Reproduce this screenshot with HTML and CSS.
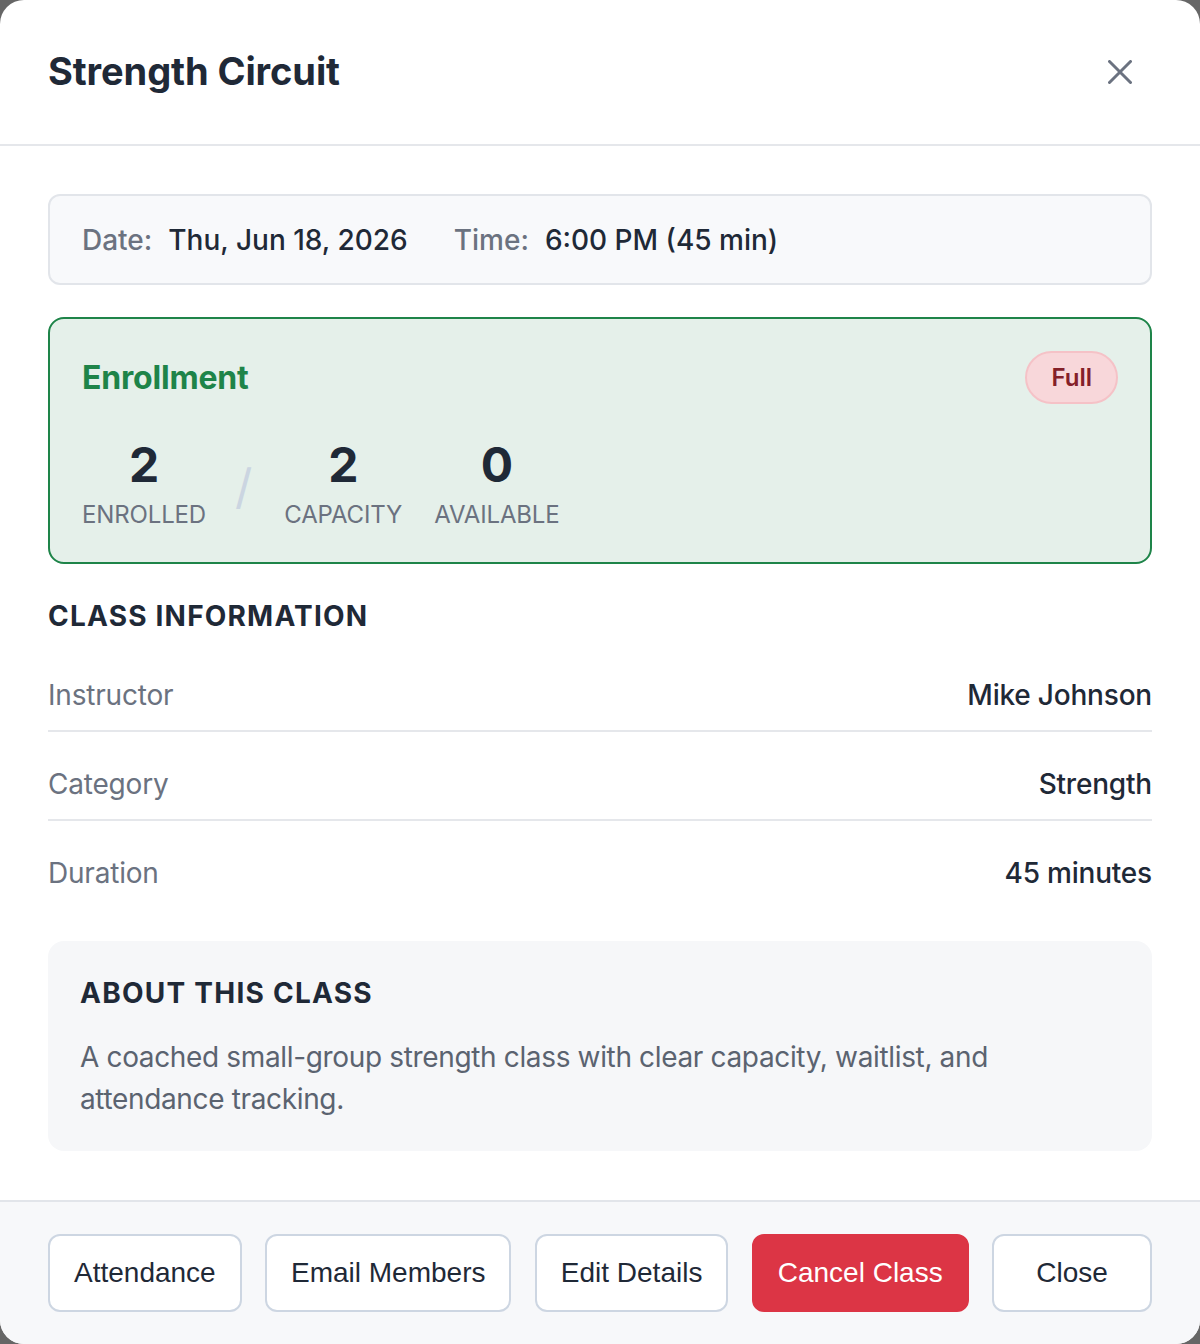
FILE: index.html
```html
<!DOCTYPE html>
<html lang="en">
<head>
<meta charset="utf-8">
<title>Strength Circuit</title>
<link rel="stylesheet" href="styles.css">
</head>
<body>
<div class="modal">
  <header class="modal-header">
    <h2 class="title">Strength Circuit</h2>
    <button class="close-x" aria-label="Close">
      <svg width="24" height="24" viewBox="0 0 24 24" fill="none" stroke="currentColor" stroke-width="3" stroke-linecap="round"><path d="M1.5 1.5L22.5 22.5M22.5 1.5L1.5 22.5"/></svg>
    </button>
  </header>
  <div class="modal-body">
    <div class="datetime">
      <div class="dt-group"><span class="dt-label">Date:</span><span class="dt-value">Thu, Jun 18, 2026</span></div>
      <div class="dt-group"><span class="dt-label">Time:</span><span class="dt-value">6:00 PM (45 min)</span></div>
    </div>

    <section class="enrollment">
      <div class="enr-head">
        <h3 class="enr-title">Enrollment</h3>
        <span class="badge">Full</span>
      </div>
      <div class="stats">
        <div class="stat"><div class="stat-num">2</div><div class="stat-label">Enrolled</div></div>
        <div class="stat-sep">/</div>
        <div class="stat"><div class="stat-num">2</div><div class="stat-label">Capacity</div></div>
        <div class="stat"><div class="stat-num">0</div><div class="stat-label">Available</div></div>
      </div>
    </section>

    <h4 class="section-title">Class Information</h4>
    <div class="info-list">
      <div class="info-row"><span class="info-label">Instructor</span><span class="info-value">Mike Johnson</span></div>
      <div class="info-row"><span class="info-label">Category</span><span class="info-value">Strength</span></div>
      <div class="info-row"><span class="info-label">Duration</span><span class="info-value">45 minutes</span></div>
    </div>

    <section class="about">
      <h4 class="about-title">About This Class</h4>
      <p class="about-text">A coached small-group strength class with clear capacity, waitlist, and attendance tracking.</p>
    </section>
  </div>
  <footer class="modal-footer">
    <button class="btn">Attendance</button>
    <button class="btn">Email Members</button>
    <button class="btn">Edit Details</button>
    <button class="btn btn-danger">Cancel Class</button>
    <button class="btn btn-close">Close</button>
  </footer>
</div>
</body>
</html>
```

FILE: styles.css
```css
* { box-sizing: border-box; }
html, body { margin: 0; padding: 0; }
body {
  background: #666666;
  font-family: Inter, "Noto Sans", sans-serif;
  color: #1f2937;
}
.modal {
  width: 1200px;
  height: 1344px;
  background: #ffffff;
  border-radius: 24px;
  overflow: hidden;
  display: flex;
  flex-direction: column;
}
.modal-header {
  display: flex;
  align-items: center;
  justify-content: space-between;
  padding: 48px 48px 49px 48px;
  border-bottom: 2px solid #e5e7eb;
}
.title {
  margin: 0;
  font-size: 38px;
  line-height: 47px;
  font-weight: 700;
  color: #1f2937;
  letter-spacing: -0.1px;
}
.close-x {
  border: 0;
  background: none;
  padding: 0;
  margin-right: 20px;
  width: 24px;
  height: 24px;
  color: #6b7280;
  display: flex;
}
.modal-body {
  flex: 1;
  padding: 48px 48px 0 48px;
}
.datetime {
  display: flex;
  gap: 46px;
  background: #f8f9fb;
  border: 2px solid #e2e5ea;
  border-radius: 12px;
  padding: 23px 32px 22px 32px;
  font-size: 28px;
  line-height: 42px;
  font-weight: 500;
}
.dt-group { display: flex; gap: 16px; }
.dt-label { color: #6b7280; }
.dt-value { color: #1f2937; }

.enrollment {
  margin-top: 32px;
  background: #e5f0ea;
  border: 2px solid #1e8449;
  border-radius: 16px;
  padding: 32px 32px 31px 32px;
}
.enr-head {
  display: flex;
  align-items: center;
  justify-content: space-between;
}
.enr-title {
  margin: 0;
  font-size: 32px;
  line-height: 40px;
  font-weight: 700;
  color: #1e8449;
  letter-spacing: -0.2px;
}
.badge {
  background: #f8d7da;
  border: 2px solid #f5c2c7;
  color: #842029;
  border-radius: 999px;
  padding: 8px 24px;
  font-size: 24px;
  line-height: 33px;
  font-weight: 600;
}
.stats {
  display: flex;
  align-items: center;
  gap: 32px;
  margin-top: 32px;
}
.stat {
  display: flex;
  flex-direction: column;
  align-items: center;
}
.stat-num {
  font-size: 48px;
  line-height: 58px;
  font-weight: 700;
  color: #1f2937;
}
.stat-label {
  margin-top: 5px;
  font-size: 24px;
  line-height: 32px;
  text-transform: uppercase;
  color: #6b7280;
  letter-spacing: -0.15px;
}
.stat-sep {
  font-size: 48px;
  line-height: 58px;
  color: #cbd5e1;
  font-weight: 400;
  margin-top: 6px;
  margin-left: -3px;
}

.section-title {
  margin: 31px 0 6px 0;
  font-size: 28px;
  line-height: 42px;
  font-weight: 700;
  text-transform: uppercase;
  letter-spacing: 1.2px;
  color: #1f2937;
}
.info-row {
  display: flex;
  justify-content: space-between;
  padding: 31px 0 14px 0;
  font-size: 28px;
  line-height: 42px;
  border-bottom: 2px solid #e5e7eb;
}
.info-row:last-child { border-bottom: 0; }
.info-label { color: #6b7280; letter-spacing: -0.2px; }
.info-value { color: #1f2937; font-weight: 500; letter-spacing: -0.2px; }

.about {
  margin-top: 33px;
  background: #f6f7f9;
  border-radius: 16px;
  padding: 31px 32px;
}
.about-title {
  margin: 0 0 22px 0;
  font-size: 28px;
  line-height: 42px;
  font-weight: 700;
  text-transform: uppercase;
  letter-spacing: 1.25px;
  color: #1f2937;
}
.about-text {
  margin: 0;
  font-size: 28px;
  line-height: 42px;
  color: #5b6370;
  letter-spacing: -0.35px;
}

.modal-footer {
  display: flex;
  justify-content: space-between;
  padding: 32px 48px;
  background: #f7f8fa;
  border-top: 2px solid #e2e5ea;
}
.btn {
  font-family: "Liberation Sans", Arial, sans-serif;
  font-size: 28px;
  line-height: 34px;
  padding: 20px 24px;
  border: 2px solid #cdd6e2;
  border-radius: 12px;
  background: #ffffff;
  color: #1f2937;
  white-space: nowrap;
}
.btn-danger {
  background: #dc3545;
  border-color: #dc3545;
  color: #ffffff;
}
.btn-close { min-width: 160px; }
```
